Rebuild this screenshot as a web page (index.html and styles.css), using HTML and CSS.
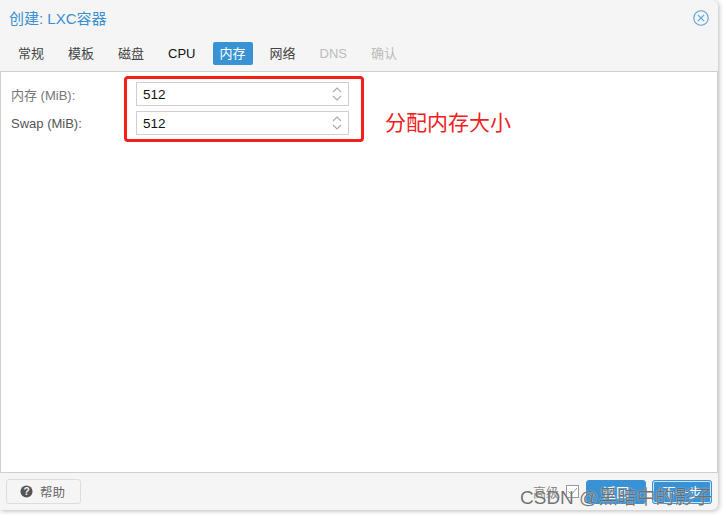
FILE: index.html
```html
<!DOCTYPE html>
<html lang="zh">
<head>
<meta charset="utf-8">
<title>创建: LXC容器</title>
<link rel="stylesheet" href="styles.css">
</head>
<body>
<div class="dialog">
  <header class="title-bar">
    <h1 class="title">创建: LXC容器</h1>
    <svg class="close" viewBox="0 0 16 16" width="16" height="16"><circle cx="8" cy="8" r="7.2"/><path d="M4.8 4.8l6.4 6.4M11.2 4.8l-6.4 6.4"/></svg>
  </header>
  <nav class="tabs">
    <span class="tab">常规</span>
    <span class="tab">模板</span>
    <span class="tab">磁盘</span>
    <span class="tab tab-dark">CPU</span>
    <span class="tab tab-active">内存</span>
    <span class="tab tab-after">网络</span>
    <span class="tab tab-off">DNS</span>
    <span class="tab tab-off">确认</span>
  </nav>
  <main class="body">
    <div class="form">
      <div class="row">
        <label class="label label-soft">内存 (MiB):</label>
        <div class="field"><span>512</span><svg class="spin" viewBox="0 0 10 16" width="10" height="16"><path d="M1 6l4-4 4 4M1 10l4 4 4-4"/></svg></div>
      </div>
      <div class="row">
        <label class="label">Swap (MiB):</label>
        <div class="field"><span>512</span><svg class="spin" viewBox="0 0 10 16" width="10" height="16"><path d="M1 6l4-4 4 4M1 10l4 4 4-4"/></svg></div>
      </div>
      <div class="callout"></div>
    </div>
    <div class="note">分配内存大小</div>
  </main>
  <footer class="footer">
    <button class="help"><svg class="help-icon" viewBox="0 0 14 14" width="13" height="13"><circle cx="7" cy="7" r="6.5"/><text x="7" y="10.7">?</text></svg>帮助</button>
    <div class="actions">
      <span class="advanced">高级</span>
      <svg class="check" viewBox="0 0 13 13" width="13" height="13"><rect x="0.5" y="0.5" width="12" height="12"/><path d="M2.5 6.5l3 3 5.5-6.5"/></svg>
      <button class="primary">返回</button>
      <button class="primary primary-focus">下一步</button>
    </div>
  </footer>
</div>
<div class="watermark">CSDN @黑暗中的影子</div>
</body>
</html>
```
FILE: styles.css
```css
* { box-sizing: border-box; }
html, body { margin: 0; height: 100%; background: #fff; overflow: hidden; }
body { position: relative; font-family: "Liberation Sans", "Noto Sans CJK SC", sans-serif; }
.dialog {
  width: 718px; height: 510px; background: #f5f5f5;
  border-radius: 0 6px 6px 0;
  box-shadow: 1px 1px 5px rgba(0,0,0,.28);
  display: flex; flex-direction: column;
}
.title-bar { height: 37px; flex: none; display: flex; align-items: center; justify-content: space-between; padding: 0 9px 2px 9px; }
.title { margin: 0; font-size: 15px; font-weight: 400; color: #3a8fd0; }
.close { fill: none; stroke: #5a9fd6; stroke-width: 1.1; }
.tabs { height: 34px; flex: none; display: flex; align-items: flex-start; padding: 5px 0 0 6px; }
.tab { height: 23px; padding: 0 12px; font-size: 13px; line-height: 23px; color: #444; border-radius: 2px; }
.tab-dark { color: #111; }
.tab-active { background: #3892d4; color: #fff; padding: 0 7px; margin-left: 5px; }
.tab-after { margin-left: 5px; }
.tab-off { color: #bbb; }
.body { flex: 1; background: #fff; border: 1px solid #cfcfcf; position: relative; }
.form { position: relative; padding: 10px 0 0 10px; }
.row { display: flex; align-items: center; height: 24px; margin-bottom: 5px; }
.label { width: 125px; flex: none; font-size: 13px; color: #555; white-space: nowrap; }
.label-soft { color: #777; }
.field { width: 213px; height: 24px; flex: none; background: #fff; border: 1px solid #cfcfcf; display: flex; align-items: center; justify-content: space-between; padding: 0 6px; font-size: 13.5px; color: #111; }
.spin { fill: none; stroke: #aaa; stroke-width: 1.1; }
.callout { position: absolute; left: 123px; top: 4px; width: 240px; height: 66px; border: 3px solid #f5201a; border-radius: 4px; }
.note { position: absolute; left: 384px; top: 34px; font-size: 21px; color: #f02020; }
.footer { height: 37px; flex: none; display: flex; align-items: center; justify-content: space-between; padding: 0 6px 0 6px; }
.help { height: 25px; width: 75px; background: #f5f5f5; border: 1px solid #ddd; border-radius: 3px; font: inherit; font-size: 12.5px; color: #666; display: flex; align-items: center; gap: 7px; padding: 0 0 0 13px; }
.help-icon { flex: none; }
.help-icon circle { fill: #555; }
.help-icon text { fill: #f5f5f5; font-size: 11px; font-weight: 700; text-anchor: middle; }
.actions { display: flex; align-items: center; }
.advanced { font-size: 13px; color: #888; }
.check { margin: 0 7px 0 7px; fill: #fff; stroke: #999; stroke-width: 1; }
.primary { height: 24px; background: #3892d4; color: #fff; border: 1px solid #3892d4; border-radius: 3px; width: 60px; font: inherit; font-size: 13px; padding: 0; }
.primary-focus { margin-left: 6px; outline: 1px solid #cfe5f6; outline-offset: -2px; }
.watermark { position: absolute; left: 520px; top: 482px; font-size: 19px; color: rgba(60,60,60,.72); text-shadow: 0 0 1px #fff; white-space: nowrap; }
```
